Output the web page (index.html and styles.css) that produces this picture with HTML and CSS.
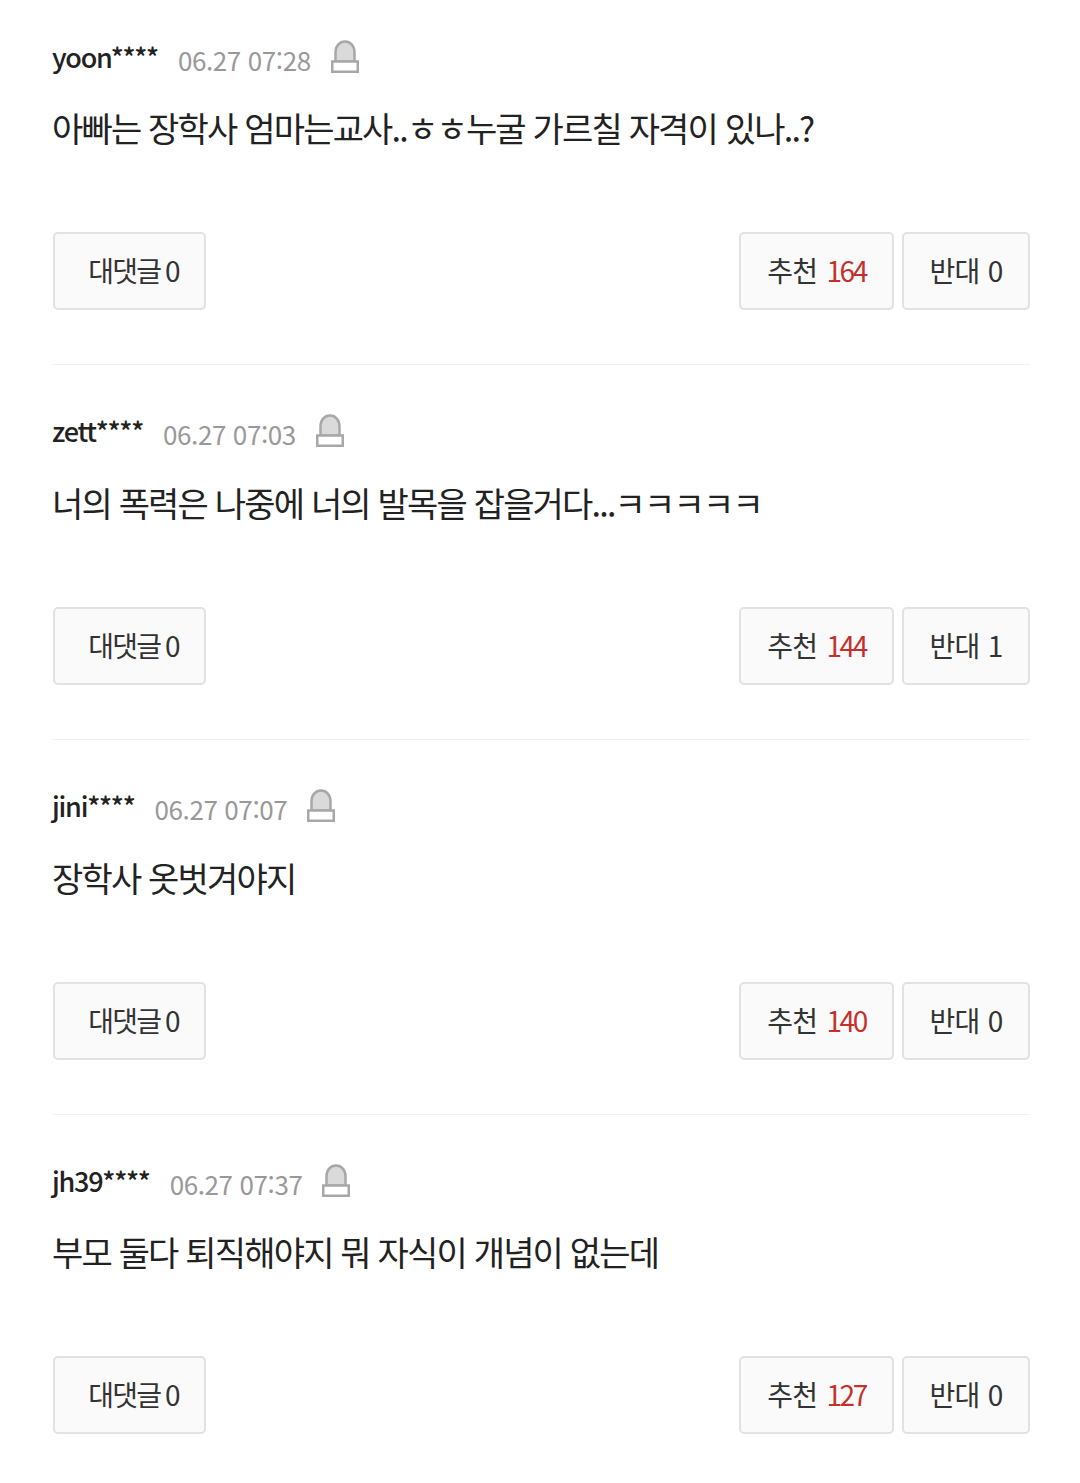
FILE: index.html
```html
<!DOCTYPE html>
<html lang="ko">
<head>
<meta charset="utf-8">
<title>댓글</title>
<link rel="stylesheet" href="styles.css">
</head>
<body>
<svg class="sprite" width="0" height="0" aria-hidden="true">
  <symbol id="siren" viewBox="0 0 28 33">
    <path d="M4.500 21.500V12.500C4.500 6 8.500 1.500 14 1.500s9.500 4.500 9.500 11V21.500z" fill="#dadada" stroke="#a8a8a8" stroke-width="2.500"/>
    <rect x="1.250" y="21.500" width="25.500" height="10.250" fill="#fff" stroke="#a8a8a8" stroke-width="2.500"/>
  </symbol>
</svg>
<main class="list">
  <article class="comment">
    <div class="meta"><span class="name">yoon****</span><span class="date">06.27 07:28</span><svg class="report"><use href="#siren"/></svg></div>
    <p class="body">아빠는 장학사 엄마는교사..ㅎㅎ누굴 가르칠 자격이 있나..?</p>
    <div class="actions"><button class="btn btn-reply">대댓글 0</button><span class="right"><button class="btn btn-up">추천 <em>164</em></button><button class="btn btn-down">반대 0</button></span></div>
  </article>
  <article class="comment">
    <div class="meta"><span class="name">zett****</span><span class="date">06.27 07:03</span><svg class="report"><use href="#siren"/></svg></div>
    <p class="body">너의 폭력은 나중에 너의 발목을 잡을거다...ㅋㅋㅋㅋㅋ</p>
    <div class="actions"><button class="btn btn-reply">대댓글 0</button><span class="right"><button class="btn btn-up">추천 <em>144</em></button><button class="btn btn-down">반대 1</button></span></div>
  </article>
  <article class="comment">
    <div class="meta"><span class="name">jini****</span><span class="date">06.27 07:07</span><svg class="report"><use href="#siren"/></svg></div>
    <p class="body">장학사 옷벗겨야지</p>
    <div class="actions"><button class="btn btn-reply">대댓글 0</button><span class="right"><button class="btn btn-up">추천 <em>140</em></button><button class="btn btn-down">반대 0</button></span></div>
  </article>
  <article class="comment comment-last">
    <div class="meta"><span class="name">jh39****</span><span class="date">06.27 07:37</span><svg class="report"><use href="#siren"/></svg></div>
    <p class="body">부모 둘다 퇴직해야지 뭐 자식이 개념이 없는데</p>
    <div class="actions"><button class="btn btn-reply">대댓글 0</button><span class="right"><button class="btn btn-up">추천 <em>127</em></button><button class="btn btn-down">반대 0</button></span></div>
  </article>
</main>
</body>
</html>
```
FILE: styles.css
```css
* { box-sizing: border-box; }
html, body { margin: 0; background: #fff; }
body { font-family: "Noto Sans CJK KR", "Noto Sans", sans-serif; color: #222; }
.sprite { position: absolute; }
.list { padding: 37px 50px 0 53px; }
.comment { padding-bottom: 46.75px; }
.comment::after { content: ""; display: block; height: 1px; background: #f0f0f0; margin-top: 54px; }
.comment-last::after { display: none; }
.meta { display: flex; align-items: center; height: 40px; }
.name { font-size: 27px; font-weight: 500; letter-spacing: -1.25px; color: #222; margin-left: -1px; position: relative; top: -1px; }
.date { font-size: 26px; letter-spacing: -.4px; color: #999; margin-left: 20px; position: relative; top: 2px; }
.report { width: 28px; height: 33px; margin-left: 20px; position: relative; top: -1px; }
.body { margin: 25px 0 0 -1px; font-size: 34px; line-height: 52px; letter-spacing: -1.81px; color: #222; height: 130px; }
.actions { display: flex; justify-content: space-between; height: 78px; }
.right { display: flex; gap: 8px; }
.btn { font: inherit; font-size: 28px; letter-spacing: -.7px; word-spacing: 2px; color: #333; background: #fafafa; border: 2px solid #e2e2e2; border-radius: 5px; height: 78px; padding: 0 0 2px; }
.btn em { font-style: normal; color: #c5302c; letter-spacing: -2.4px; }
.btn-reply { width: 153px; padding-left: 8px; letter-spacing: -1.7px; word-spacing: -1.5px; }
.btn-up { width: 155px; }
.btn-down { width: 128px; word-spacing: 1px; }
```
